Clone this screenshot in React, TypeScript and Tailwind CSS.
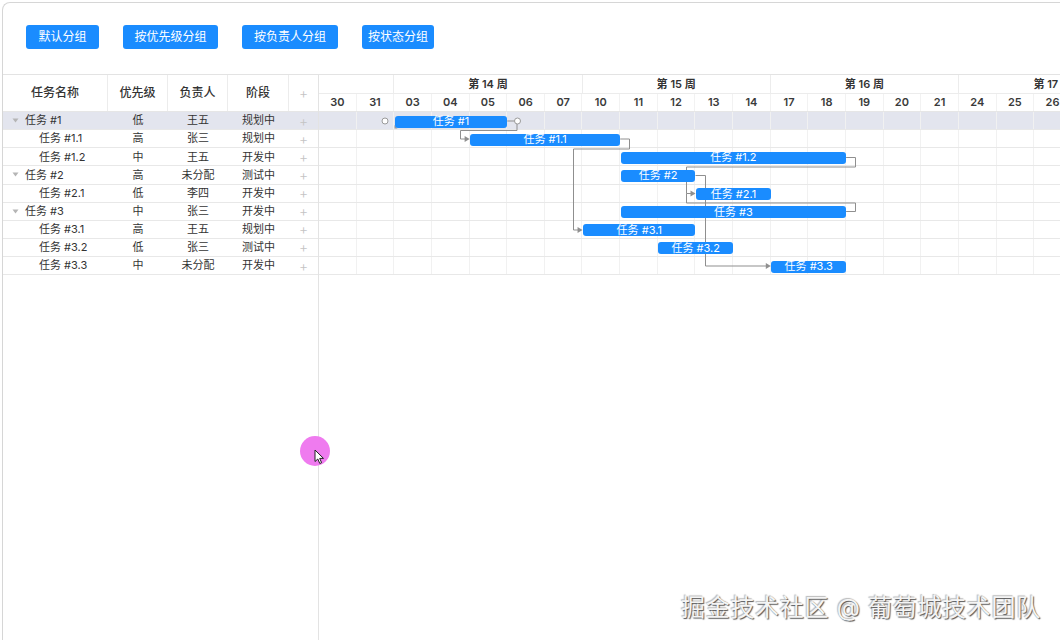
import React from "react";

type Task = {
  name: string;
  level: 0 | 1;
  priority: string;
  owner: string;
  stage: string;
  start: number;
  len: number;
};

const COL = 37.65;
const ROW = 18.125;

const tasks: Task[] = [
  { name: "任务 #1", level: 0, priority: "低", owner: "王五", stage: "规划中", start: 2, len: 3 },
  { name: "任务 #1.1", level: 1, priority: "高", owner: "张三", stage: "规划中", start: 4, len: 4 },
  { name: "任务 #1.2", level: 1, priority: "中", owner: "王五", stage: "开发中", start: 8, len: 6 },
  { name: "任务 #2", level: 0, priority: "高", owner: "未分配", stage: "测试中", start: 8, len: 2 },
  { name: "任务 #2.1", level: 1, priority: "低", owner: "李四", stage: "开发中", start: 10, len: 2 },
  { name: "任务 #3", level: 0, priority: "中", owner: "张三", stage: "开发中", start: 8, len: 6 },
  { name: "任务 #3.1", level: 1, priority: "高", owner: "王五", stage: "规划中", start: 7, len: 3 },
  { name: "任务 #3.2", level: 1, priority: "低", owner: "张三", stage: "测试中", start: 9, len: 2 },
  { name: "任务 #3.3", level: 1, priority: "中", owner: "未分配", stage: "开发中", start: 12, len: 2 },
];

const days = ["30", "31", "03", "04", "05", "06", "07", "10", "11", "12", "13", "14", "17", "18", "19", "20", "21", "24", "25", "26", "27", "28"];

const weeks = [
  { label: "", span: 2 },
  { label: "第 14 周", span: 5 },
  { label: "第 15 周", span: 5 },
  { label: "第 16 周", span: 5 },
  { label: "第 17 周", span: 5 },
];

const groupButtons = [
  { label: "默认分组", w: "w-[73px]" },
  { label: "按优先级分组", w: "w-[95px]" },
  { label: "按负责人分组", w: "w-[96px]" },
  { label: "按状态分组", w: "w-[72px]" },
];

// row centre / bar edge helpers for the connector paths
const cy = (i: number) => Math.round((i * ROW + ROW / 2) * 2) / 2;
const gap = (i: number) => Math.round(((i + 1) * ROW) * 2) / 2 + 0.5;
const endX = (t: Task) => (t.start + t.len) * COL;
const startX = (t: Task) => t.start * COL;

const [t1, t11, t12, t2, t21, t3, t31, , t33] = tasks;

const links = [
  `M${endX(t1)},${cy(0)} H198 V${gap(0)} H141.5 V${cy(1)} H${startX(t11) - 3}`,
  `M${endX(t11)},${cy(1)} H310.5 V${gap(1)} H254.5 V${cy(6)} H${startX(t31) - 3}`,
  `M${endX(t12)},${cy(2)} H536.5 V${gap(2)} H367.5 V${cy(4)} H${startX(t21) - 3}`,
  `M${endX(t3)},${cy(5)} H536.5 V${gap(4)} H367.5 V${cy(4)}`,
  `M${endX(t2)},${cy(3)} H386.5 V${cy(8)} H${startX(t33) - 3}`,
];

const arrowHeads = [
  { x: startX(t11), y: cy(1) },
  { x: startX(t31), y: cy(6) },
  { x: startX(t21), y: cy(4) },
  { x: startX(t33), y: cy(8) },
];

function Caret() {
  return (
    <svg width="7" height="5" viewBox="0 0 7 5" className="mr-[6px] shrink-0">
      <path d="M0.5 0.5 L6.5 0.5 L3.5 4.5 Z" fill="#b5b5b5" />
    </svg>
  );
}

function Plus() {
  return <span className="text-[14px] font-light leading-none text-[#c4c4c4]">+</span>;
}

export default function App() {
  return (
    <div
      className="relative h-[640px] w-[1060px] overflow-hidden bg-white text-[#333]"
      style={{ fontFamily: '"Inter", "Noto Sans CJK SC", "Noto Sans", sans-serif' }}
    >
      <div className="ml-[2px] mt-[2px] flex h-[638px] flex-col rounded-tl-[8px] border-l border-t border-[#d6d6d6]">
        {/* grouping toolbar */}
        <div className="flex gap-[24px] pl-[23px] pt-[22px]">
          {groupButtons.map((b) => (
            <button
              key={b.label}
              className={`${b.w} h-[24px] rounded-[3px] bg-[#1a8cff] text-[12px] leading-[24px] text-white`}
            >
              {b.label}
            </button>
          ))}
        </div>

        {/* gantt */}
        <div className="mt-[25px] flex flex-1 border-t border-[#e3e3e3]">
          {/* task table */}
          <div className="flex w-[316px] shrink-0 flex-col border-r border-[#e3e3e3]">
            <div className="flex h-[37px] border-b border-[#e6e6e6] text-[12px] font-medium text-[#333]">
              <div className="flex w-[105px] items-center justify-center border-r border-[#ececec]">任务名称</div>
              <div className="flex w-[60px] items-center justify-center border-r border-[#ececec]">优先级</div>
              <div className="flex w-[60px] items-center justify-center border-r border-[#ececec]">负责人</div>
              <div className="flex w-[61px] items-center justify-center border-r border-[#ececec]">阶段</div>
              <div className="flex w-[29px] items-center justify-center">
                <Plus />
              </div>
            </div>
            {tasks.map((t, i) => (
              <div
                key={t.name}
                className={`flex h-[18.125px] border-b border-[#e8e8e8] text-[11px] text-[#333] ${i === 0 ? "bg-[#e3e5ee]" : ""}`}
              >
                <div className={`flex w-[105px] items-center ${t.level === 0 ? "pl-[9px]" : "pl-[36px]"}`}>
                  {t.level === 0 && <Caret />}
                  {t.name}
                </div>
                <div className="flex w-[60px] items-center justify-center">{t.priority}</div>
                <div className="flex w-[60px] items-center justify-center">{t.owner}</div>
                <div className="flex w-[61px] items-center justify-center">{t.stage}</div>
                <div className="flex w-[29px] items-center justify-center">
                  <Plus />
                </div>
              </div>
            ))}
          </div>

          {/* timeline */}
          <div className="flex min-w-0 flex-1 flex-col overflow-hidden">
            <div className="flex h-[19px] border-b border-[#ececec] text-[11px] font-semibold text-[#333]">
              {weeks.map((w, i) => (
                <div
                  key={i}
                  className="flex shrink-0 items-center justify-center whitespace-nowrap border-r border-[#ececec]"
                  style={{ width: w.span * COL }}
                >
                  {w.label}
                </div>
              ))}
            </div>
            <div className="flex h-[18px] border-b border-[#e6e6e6] text-[11px] font-semibold text-[#3a3a3a]">
              {days.map((d, i) => (
                <div key={i} className="flex w-[37.65px] shrink-0 items-center justify-center border-r border-[#f2f2f2]">
                  {d}
                </div>
              ))}
            </div>

            <div className="relative">
              {tasks.map((t, i) => (
                <div key={t.name} className={`flex h-[18.125px] border-b border-[#e8e8e8] ${i === 0 ? "bg-[#e3e5ee]" : ""}`}>
                  {days.map((d, j) => (
                    <div key={j} className="h-full w-[37.65px] shrink-0 border-r border-[#f1f1f1]" />
                  ))}
                </div>
              ))}

              <svg className="pointer-events-none absolute left-0 top-0" width="760" height="170">
                {links.map((d, i) => (
                  <path key={i} d={d} fill="none" stroke="#8f8f8f" strokeWidth="1" />
                ))}
                {arrowHeads.map((a, i) => (
                  <path key={i} d={`M${a.x} ${a.y} L${a.x - 5} ${a.y - 3} L${a.x - 5} ${a.y + 3} Z`} fill="#8f8f8f" />
                ))}
                <circle cx="66" cy="9" r="3" fill="white" stroke="#9a9a9a" strokeWidth="1" />
                <circle cx="198.5" cy="9" r="3" fill="white" stroke="#9a9a9a" strokeWidth="1" />
                <path d="M75.5 16.5 L78.5 16.5 L75.5 13 Z" fill="#9a9a9a" />
              </svg>

              {tasks.map((t, i) => (
                <div
                  key={t.name}
                  className="absolute flex h-[12px] items-center justify-center rounded-[3px] bg-[#1a8cff] text-[11px] leading-none text-white"
                  style={{ left: t.start * COL + 0.5, width: t.len * COL - 0.5, top: i * ROW + 3.5 }}
                >
                  {t.name}
                </div>
              ))}
            </div>
          </div>
        </div>
      </div>

      {/* pointer highlight */}
      <div className="absolute left-[300px] top-[436px] h-[30px] w-[30px] rounded-full bg-[#ef7bef]" />
      <svg className="absolute left-[314px] top-[449px]" width="12" height="16" viewBox="0 0 12 16">
        <path d="M1 1 L1 12.5 L3.8 10 L5.8 14.5 L7.6 13.7 L5.7 9.4 L9.5 9.4 Z" fill="white" stroke="#222" strokeWidth="1" strokeLinejoin="round" />
      </svg>

      <div className="absolute left-[681px] top-[590px] whitespace-nowrap text-[24px] tracking-[0.7px] text-[#f4f4f4] [text-shadow:1px_1px_1px_#555,-1px_-1px_1px_#bbb]">
        掘金技术社区 @ 葡萄城技术团队
      </div>
    </div>
  );
}
